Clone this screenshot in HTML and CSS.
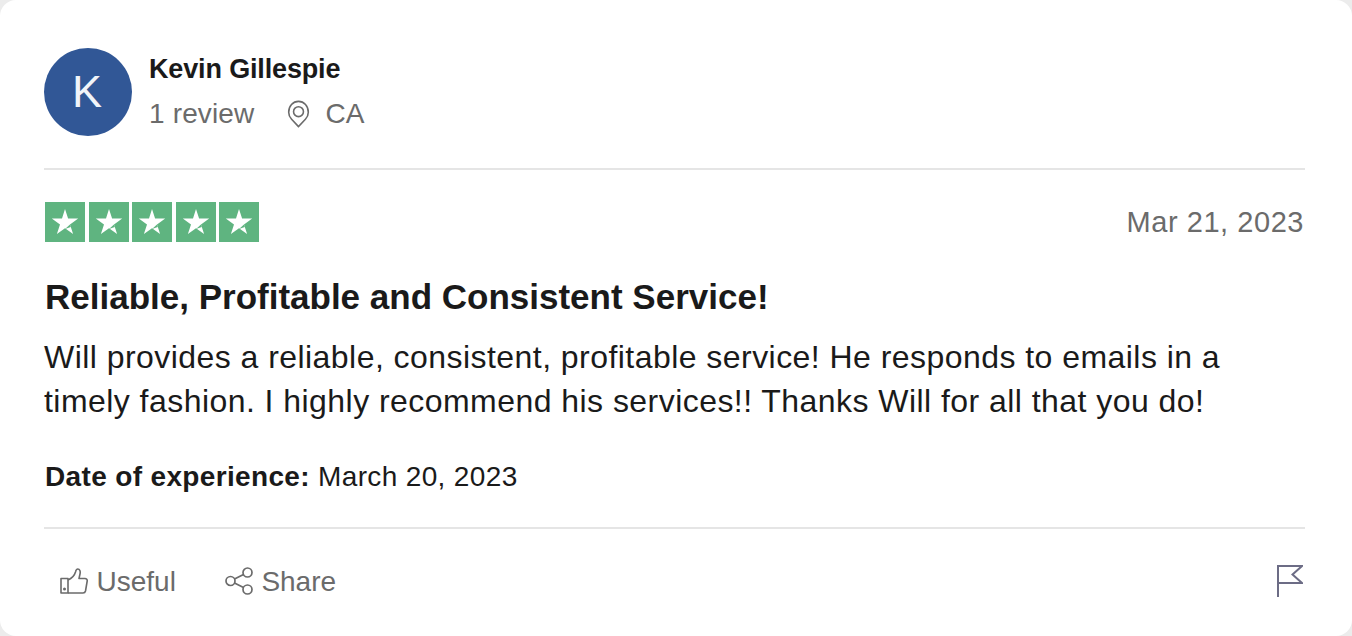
FILE: index.html
```html
<!DOCTYPE html>
<html lang="en">
<head>
<meta charset="utf-8">
<title>Review</title>
<link rel="stylesheet" href="styles.css">
</head>
<body>
<article class="card">
  <header class="consumer">
    <div class="avatar">K</div>
    <div class="who">
      <div class="name">Kevin Gillespie</div>
      <div class="meta">
        <span>1 review</span>
        <span class="loc">
          <svg class="pin" viewBox="0 0 24 30" fill="none" stroke="#6b6b6b" stroke-width="1.7"><path d="M12 28.5 4.6 20.6C2.6 18.5 1.5 16 1.5 13 1.5 6.5 6 1.5 12 1.5S22.5 6.5 22.5 13c0 3-1.1 5.5-3.1 7.6z"/><circle cx="12" cy="12.5" r="5.3"/></svg>
          <span>CA</span>
        </span>
      </div>
    </div>
  </header>
  <section class="review">
    <div class="rating-row">
      <div class="stars">
        <span class="star"><svg viewBox="0 0 40 40"><path class="sw" d="M20 7l3.100 9.600H33.200l-8.200 5.900 3.100 9.600-8.100-5.900-8.100 5.900 3.100-9.600-8.200-5.900H17z"/><path class="sd" d="M25 22.500l.8 2.600-5.800 2z"/></svg></span>
        <span class="star"><svg viewBox="0 0 40 40"><path class="sw" d="M20 7l3.100 9.600H33.200l-8.200 5.900 3.100 9.600-8.100-5.900-8.100 5.900 3.100-9.600-8.200-5.900H17z"/><path class="sd" d="M25 22.500l.8 2.600-5.800 2z"/></svg></span>
        <span class="star"><svg viewBox="0 0 40 40"><path class="sw" d="M20 7l3.100 9.600H33.200l-8.200 5.900 3.100 9.600-8.100-5.900-8.100 5.900 3.100-9.600-8.200-5.900H17z"/><path class="sd" d="M25 22.500l.8 2.600-5.800 2z"/></svg></span>
        <span class="star"><svg viewBox="0 0 40 40"><path class="sw" d="M20 7l3.100 9.600H33.200l-8.200 5.900 3.100 9.600-8.100-5.900-8.100 5.900 3.100-9.600-8.200-5.900H17z"/><path class="sd" d="M25 22.500l.8 2.600-5.800 2z"/></svg></span>
        <span class="star"><svg viewBox="0 0 40 40"><path class="sw" d="M20 7l3.100 9.600H33.200l-8.200 5.900 3.100 9.600-8.100-5.900-8.100 5.900 3.100-9.600-8.200-5.900H17z"/><path class="sd" d="M25 22.500l.8 2.600-5.800 2z"/></svg></span>
      </div>
      <time class="date">Mar 21, 2023</time>
    </div>
    <h2 class="title">Reliable, Profitable and Consistent Service!</h2>
    <p class="text">Will provides a reliable, consistent, profitable service! He responds to emails in a timely fashion. I highly recommend his services!! Thanks Will for all that you do!</p>
    <p class="exp"><b>Date of experience:</b> March 20, 2023</p>
  </section>
  <footer class="actions">
    <div class="left">
      <button class="act">
        <svg class="ic-thumb" viewBox="0 0 28 26" fill="none" stroke="#6b6b6b" stroke-width="1.6" stroke-linejoin="round"><path d="M1 10.5h7V25H1z"/><path d="M8 12c3.500-1.500 6.500-4.500 7.500-8 .4-1.800 1-3 2.300-3 2 0 2.800 2.500 2.200 5L19 10.500h6c1.500 0 2.400 1 2.200 2.500L25.500 23c-.3 1.300-1 2-2.500 2H8"/><circle cx="4.5" cy="21" r=".7" fill="#6b6b6b"/></svg>
        <span>Useful</span>
      </button>
      <button class="act">
        <svg class="ic-share" viewBox="0 0 28 28" fill="none" stroke="#6b6b6b" stroke-width="1.7"><circle cx="5.5" cy="14" r="4.5"/><circle cx="22.5" cy="5.5" r="4.5"/><circle cx="22.5" cy="22.5" r="4.5"/><path d="M9.500 12 18.500 7.500M9.500 16l9 4.500"/></svg>
        <span>Share</span>
      </button>
    </div>
    <button class="flag" aria-label="Report">
      <svg viewBox="0 0 26 32" fill="none" stroke="#6c6c85" stroke-width="2"><path d="M1 32V1H25L15.500 9.500 25 18H1"/></svg>
    </button>
  </footer>
</article>
</body>
</html>
```
FILE: styles.css
```css
* { box-sizing: border-box; }
html, body { margin: 0; height: 100%; }
body { background: #ececec; font-family: "Liberation Sans", Arial, sans-serif; overflow: hidden; }
.card { background: #fff; border-radius: 16px; width: 1352px; height: 636px; padding: 48px 47px 0 44px; color: #1a1a1a; }
.consumer { display: flex; gap: 17px; height: 122px; border-bottom: 2px solid #e5e5e5; }
.avatar { width: 88px; height: 88px; border-radius: 50%; background: #315796; color: #f1f4f9; font-size: 45px; padding-right: 2px; display: flex; align-items: center; justify-content: center; }
.who { padding-top: 3px; }
.name { font-size: 27px; font-weight: 700; line-height: 36px; letter-spacing: -.15px; }
.meta { display: flex; gap: 33px; margin-top: 9px; font-size: 28px; line-height: 36px; letter-spacing: .15px; color: #6b6b6b; }
.loc { display: flex; align-items: center; gap: 15px; }
.pin { width: 23px; height: 28px; }
.review { padding-top: 32px; }
.rating-row { display: flex; justify-content: space-between; align-items: center; height: 41px; padding-right: 1px; }
.stars { display: flex; gap: 3.5px; padding-left: 1px; align-self: flex-start; }
.star { width: 40px; height: 40px; background: #5fb480; display: block; }
.star svg { display: block; width: 40px; height: 40px; }
.sw { fill: #fff; }
.sd { fill: #5fb480; }
.date { font-size: 29px; color: #6b6b6b; letter-spacing: .55px; }
.title { margin: 31px 0 0; padding-left: 1px; font-size: 35px; line-height: 46px; font-weight: 700; }
.text { margin: 15px 0 0; font-size: 32px; line-height: 44px; letter-spacing: .45px; }
.exp { margin: 36px 0 0; padding: 0 0 32px 1px; font-size: 28px; line-height: 36px; letter-spacing: .35px; border-bottom: 2px solid #e5e5e5; }
.actions { display: flex; justify-content: space-between; align-items: center; height: 104px; }
.left { display: flex; gap: 49px; padding-left: 16px; }
.act { display: flex; align-items: center; gap: 8.5px; border: 0; background: none; padding: 0; font: inherit; font-size: 28px; color: #6b6b6b; }
.act span { padding-top: 2px; }
.ic-thumb { width: 28px; height: 26px; }
.ic-share { width: 28px; height: 28px; }
.flag { border: 0; background: none; padding: 0 2px 0 0; width: 28px; height: 32px; }
.flag svg { display: block; width: 26px; height: 32px; }
```
